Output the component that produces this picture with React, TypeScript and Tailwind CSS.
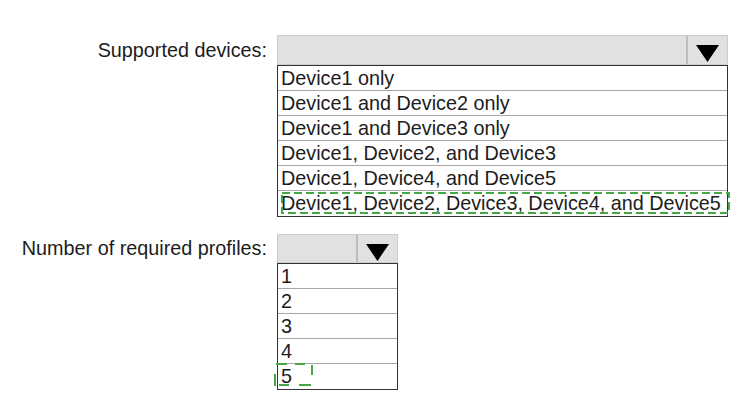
import React from 'react';

const devices = [
  'Device1 only',
  'Device1 and Device2 only',
  'Device1 and Device3 only',
  'Device1, Device2, and Device3',
  'Device1, Device4, and Device5',
  'Device1, Device2, Device3, Device4, and Device5',
];

const profiles = ['1', '2', '3', '4', '5'];

const Arrow = () => (
  <svg width="23" height="17" viewBox="0 0 23 17">
    <polygon points="0,0 23,0 11.5,17" fill="#000" />
  </svg>
);

// header box of a drop-down, grey with the arrow cell on the right
const Header: React.FC<{ height: string }> = ({ height }) => (
  <div className={`flex ${height} bg-[#e1e1e1] border border-[#cdcdcd]`}>
    <div className="flex-1" />
    <div className="w-[41px] border-l-2 border-[#bdbdbd] flex justify-center pt-[9px]">
      <Arrow />
    </div>
  </div>
);

export default function App() {
  return (
    <div
      className="w-[733px] h-[396px] bg-white text-[#1c1c1c] text-[19.8px] leading-none overflow-hidden"
      style={{ fontFamily: '"Liberation Sans", Arial, sans-serif' }}
    >
      {/* Supported devices */}
      <div className="flex pt-[35px]">
        <div className="w-[267px] h-[30px] flex items-center justify-end pt-[1px]">Supported devices:</div>
        <div className="ml-[10px] w-[451px]">
          <Header height="h-[30px]" />
          <div className="border border-[#333]">
            {devices.map((d, i) => (
              <div
                key={d}
                className={`relative h-[25px] flex items-center pl-[3px] pt-[1px] ${i < devices.length - 1 ? 'border-b border-[#a8a8a8]' : ''}`}
              >
                {d}
                {i === devices.length - 1 && (
                  <svg className="absolute left-[3px] top-[1px] overflow-visible" width="449" height="22">
                    <rect x="1" y="1" width="447" height="20" fill="none" stroke="#45a845" strokeWidth="2" strokeDasharray="8 4" />
                  </svg>
                )}
              </div>
            ))}
          </div>
        </div>
      </div>

      {/* Number of required profiles */}
      <div className="flex pt-[17px]">
        <div className="w-[267px] h-[29px] flex items-center justify-end pt-[1px]">Number of required profiles:</div>
        <div className="ml-[10px] w-[121px]">
          <Header height="h-[29px]" />
          <div className="border border-[#333]">
            {profiles.map((p, i) => (
              <div
                key={p}
                className={`relative h-[25px] flex items-center pl-[3px] pt-[1px] ${i < profiles.length - 1 ? 'border-b border-[#a8a8a8]' : ''}`}
              >
                {p}
                {i === profiles.length - 1 && (
                  <svg className="absolute left-[-3px] top-[-1px] overflow-visible" width="40" height="26">
                    <g stroke="#45a845" strokeWidth="2" fill="none">
                      <line x1="1" y1="1" x2="12" y2="1" />
                      <line x1="20" y1="1" x2="30" y2="1" />
                      <line x1="37" y1="2" x2="37" y2="12" />
                      <line x1="0" y1="11" x2="0" y2="23" />
                      <line x1="4" y1="22" x2="14" y2="22" />
                      <line x1="24" y1="22" x2="36" y2="22" />
                    </g>
                  </svg>
                )}
              </div>
            ))}
          </div>
        </div>
      </div>
    </div>
  );
}
